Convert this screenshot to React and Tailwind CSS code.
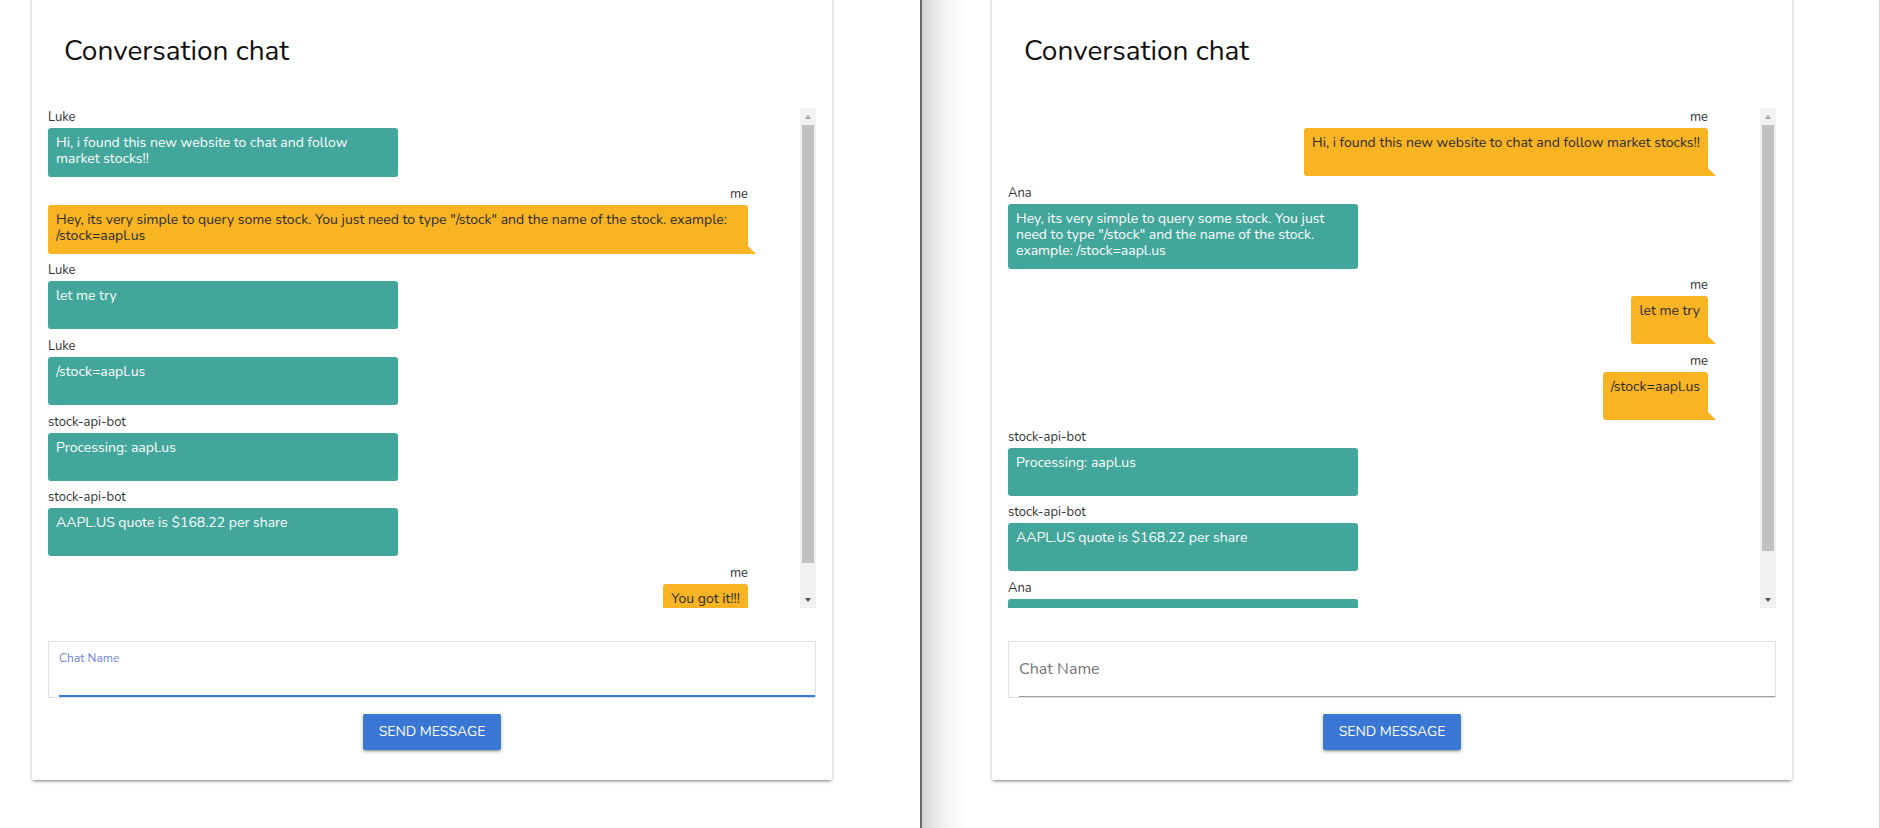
import React from "react";

const leftMessages = [
  { from: "Luke", text: "Hi, i found this new website to chat and follow market stocks!!" },
  { from: "me", text: 'Hey, its very simple to query some stock. You just need to type "/stock" and the name of the stock. example: /stock=aapl.us' },
  { from: "Luke", text: "let me try" },
  { from: "Luke", text: "/stock=aapl.us" },
  { from: "stock-api-bot", text: "Processing: aapl.us" },
  { from: "stock-api-bot", text: "AAPL.US quote is $168.22 per share" },
  { from: "me", text: "You got it!!!" },
];

// last bubble is scrolled below the fold, only its top edge shows
const rightMessages = [
  { from: "me", text: "Hi, i found this new website to chat and follow market stocks!!" },
  { from: "Ana", text: 'Hey, its very simple to query some stock. You just need to type "/stock" and the name of the stock. example: /stock=aapl.us' },
  { from: "me", text: "let me try" },
  { from: "me", text: "/stock=aapl.us" },
  { from: "stock-api-bot", text: "Processing: aapl.us" },
  { from: "stock-api-bot", text: "AAPL.US quote is $168.22 per share" },
  { from: "Ana", text: "" },
];

function Message({ from, text }) {
  const mine = from === "me";
  return (
    <div className={mine ? "flex flex-col items-end" : "flex flex-col items-start"}>
      <span className="h-4 text-[13px] leading-4 text-[#333]">{from}</span>
      {mine ? (
        <div className="relative mt-[3px] min-h-[48px] max-w-full rounded-t-[3px] rounded-bl-[3px] bg-[#f9b423] px-2 pt-[7px] pb-[10px] text-[14px] leading-4 text-[#2b2b2b]">
          {text}
          <span className="absolute -right-2 bottom-0 h-0 w-0 border-t-8 border-l-8 border-t-transparent border-l-[#f9b423]" />
        </div>
      ) : (
        <div className="mt-[3px] min-h-[48px] w-1/2 rounded-[3px] bg-[#42a69a] px-2 pt-[7px] pb-[10px] text-[14px] leading-4 text-white">
          {text}
        </div>
      )}
    </div>
  );
}

function Scrollbar({ thumb }) {
  return (
    <div className="flex w-4 flex-col bg-[#f1f1f1]">
      <div className="flex h-[17px] items-center justify-center">
        <span className="h-0 w-0 border-r-[3.5px] border-b-4 border-l-[3.5px] border-r-transparent border-b-[#a3a3a3] border-l-transparent" />
      </div>
      <div className="flex-1 px-[2px]">
        <div className={`${thumb} bg-[#c1c1c1]`} />
      </div>
      <div className="flex h-[17px] items-center justify-center">
        <span className="h-0 w-0 border-t-4 border-r-[3.5px] border-l-[3.5px] border-t-[#505050] border-r-transparent border-l-transparent" />
      </div>
    </div>
  );
}

function ChatCard({ messages, thumb, focused }) {
  return (
    <div className="-mt-1 flex h-[784px] w-[800px] flex-col rounded-[2px] bg-white px-4 pt-[38px] shadow-[0_2px_2px_0_rgba(0,0,0,0.14),0_3px_1px_-2px_rgba(0,0,0,0.12),0_1px_5px_0_rgba(0,0,0,0.2)]">
      <h1 className="pl-4 text-[28px] leading-[34px] text-[#111]">Conversation chat</h1>

      <div className="mt-10 flex h-[500px]">
        <div className="flex flex-1 flex-col gap-[8.7px] overflow-hidden pt-px pr-[52px]">
          {messages.map((m, i) => (
            <Message key={i} {...m} />
          ))}
        </div>
        <Scrollbar thumb={thumb} />
      </div>

      <div className="mt-[33px] flex h-[57px] flex-col border border-[#e0e0e0] pl-[10px]">
        {focused ? (
          <div className="flex flex-1 flex-col border-b-2 border-[#3a76d3] pt-[8px]">
            <span className="text-[12px] leading-4 text-[#7482e0]">Chat Name</span>
          </div>
        ) : (
          <div className="flex flex-1 flex-col border-b border-[#9e9e9e] pt-[17px]">
            <span className="text-[16px] leading-5 text-[#757575]">Chat Name</span>
          </div>
        )}
      </div>

      <div className="mt-4 flex justify-center">
        <button className="h-9 rounded-[2px] bg-[#3a76d3] px-4 text-[14px] leading-9 text-white uppercase shadow-[0_2px_2px_0_rgba(0,0,0,0.14),0_3px_1px_-2px_rgba(0,0,0,0.12),0_1px_5px_0_rgba(0,0,0,0.2)]">
          Send message
        </button>
      </div>
    </div>
  );
}

export default function App() {
  return (
    <div className="flex h-[828px] w-[1880px] overflow-hidden bg-white font-['Nunito','Lato',sans-serif]">
      <div className="w-[920px] pl-8">
        <ChatCard messages={leftMessages} thumb="h-[438px]" focused />
      </div>
      <div className="w-[2px] bg-[#6b6b6b]" />
      <div className="flex flex-1 bg-[linear-gradient(to_right,#d6d6d6,#f4f4f4_24px,#ffffff_44px)] pl-[70px]">
        <ChatCard messages={rightMessages} thumb="h-[426px]" />
        <div className="ml-auto w-px bg-[#d4d4d4]" />
      </div>
    </div>
  );
}
